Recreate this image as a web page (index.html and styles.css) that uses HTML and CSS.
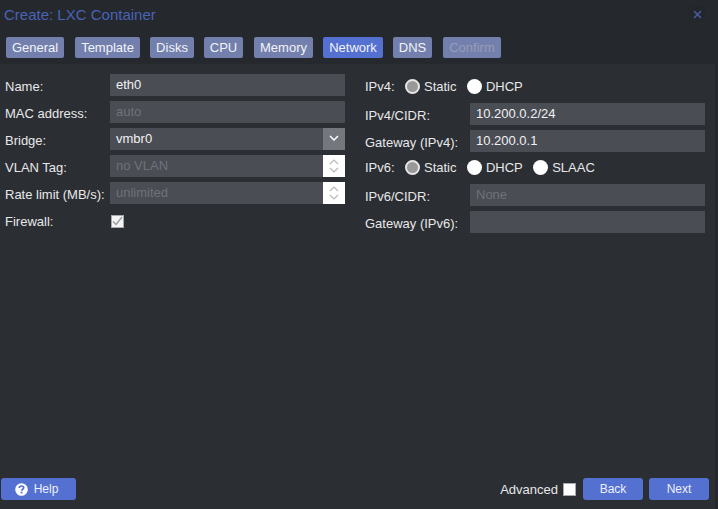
FILE: index.html
```html
<!DOCTYPE html>
<html lang="en">
<head>
<meta charset="utf-8">
<title>Create: LXC Container</title>
<link rel="stylesheet" href="styles.css">
</head>
<body>
<div class="window">
  <header class="head">
    <div class="titlebar">
      <h1 class="title">Create: LXC Container</h1>
      <span class="close"><svg width="9" height="9" viewBox="0 0 9 9"><path d="M1 1L8 8M8 1L1 8" stroke="#4a5a9c" stroke-width="1.6" fill="none"/></svg></span>
    </div>
    <nav class="tabs">
      <span class="tab w-general">General</span>
      <span class="tab w-template">Template</span>
      <span class="tab w-disks">Disks</span>
      <span class="tab w-cpu">CPU</span>
      <span class="tab w-memory">Memory</span>
      <span class="tab active w-network">Network</span>
      <span class="tab w-dns">DNS</span>
      <span class="tab off w-confirm">Confirm</span>
    </nav>
  </header>
  <main class="body">
    <div class="columns">
      <section class="col col-left">
        <div class="row"><span class="label">Name:</span><div class="field"><span class="value">eth0</span></div></div>
        <div class="row"><span class="label">MAC address:</span><div class="field"><span class="value ph">auto</span></div></div>
        <div class="row"><span class="label">Bridge:</span><div class="field"><span class="value">vmbr0</span><span class="trigger"><svg class="trigger-icon" width="10" height="6" viewBox="0 0 10 6"><path d="M1 1L5 5L9 1" stroke="#fff" stroke-width="1.5" fill="none"/></svg></span></div></div>
        <div class="row"><span class="label">VLAN Tag:</span><div class="field"><span class="value ph">no VLAN</span><span class="spinner"><svg width="10" height="14" viewBox="0 0 10 14"><path d="M1 5L5 1L9 5M1 9L5 13L9 9" stroke="#b8b8b8" stroke-width="1.2" fill="none"/></svg></span></div></div>
        <div class="row"><span class="label">Rate limit (MB/s):</span><div class="field"><span class="value ph">unlimited</span><span class="spinner"><svg width="10" height="14" viewBox="0 0 10 14"><path d="M1 5L5 1L9 5M1 9L5 13L9 9" stroke="#b8b8b8" stroke-width="1.2" fill="none"/></svg></span></div></div>
        <div class="row"><span class="label">Firewall:</span><span class="check checked"><svg width="11" height="10" viewBox="0 0 11 10"><path d="M1 5.5L4 8.5L10 1" stroke="#9a9a9a" stroke-width="1.3" fill="none"/></svg></span></div>
      </section>
      <section class="col col-right">
        <div class="row radio-first"><span class="radio-label">IPv4:</span><span class="radio on"></span><span class="opt">Static</span><span class="radio"></span><span class="opt">DHCP</span></div>
        <div class="row"><span class="label">IPv4/CIDR:</span><div class="field"><span class="value">10.200.0.2/24</span></div></div>
        <div class="row"><span class="label">Gateway (IPv4):</span><div class="field"><span class="value">10.200.0.1</span></div></div>
        <div class="row radio-second"><span class="radio-label">IPv6:</span><span class="radio on"></span><span class="opt">Static</span><span class="radio"></span><span class="opt">DHCP</span><span class="radio"></span><span class="opt">SLAAC</span></div>
        <div class="row"><span class="label">IPv6/CIDR:</span><div class="field"><span class="value ph">None</span></div></div>
        <div class="row"><span class="label">Gateway (IPv6):</span><div class="field"></div></div>
      </section>
    </div>
    <footer class="foot">
      <span class="btn btn-help"><svg class="help-icon" width="13" height="13" viewBox="0 0 13 13"><circle cx="6.5" cy="6.5" r="6.3" fill="#fff"/><path d="M4.3 5C4.4 3.7 5.4 3 6.5 3C7.8 3 8.7 3.8 8.7 4.8C8.7 6.2 6.8 6.2 6.6 7.7" stroke="#5470d0" stroke-width="1.7" fill="none"/><rect x="5.6" y="8.7" width="1.9" height="1.7" fill="#5470d0"/></svg>Help</span>
      <span class="adv">Advanced</span>
      <span class="check adv-check"></span>
      <span class="btn btn-nav">Back</span>
      <span class="btn btn-nav btn-next">Next</span>
    </footer>
  </main>
</div>
</body>
</html>
```
FILE: styles.css
```css
* { box-sizing: border-box; }
html, body { margin: 0; padding: 0; }
body {
  width: 718px;
  height: 509px;
  overflow: hidden;
  background: #25282d;
  color: #e8e8ea;
  font-family: "Liberation Sans", Arial, sans-serif;
  font-size: 13px;
}
.window { display: flex; flex-direction: column; height: 509px; }
.head { height: 64px; flex: none; }
.titlebar {
  display: flex;
  align-items: center;
  justify-content: space-between;
  height: 28px;
  padding: 0 3px 0 4px;
}
.title {
  margin: 0;
  font-size: 15px;
  font-weight: 400;
  color: #4a63b5;
}
.close {
  display: flex;
  align-items: center;
  justify-content: center;
  width: 16px;
  height: 16px;
  margin-right: 10px;
  background: #23262b;
}
.tabs { display: flex; height: 21px; margin-top: 9px; padding-left: 6px; }
.tab {
  display: flex;
  align-items: center;
  justify-content: center;
  flex: none;
  height: 21px;
  border-radius: 2px;
  background: #7380ad;
  color: #f2f3f8;
}
.tab.active { background: #5470d0; }
.tab.off { color: #969cb8; }
.w-general { width: 58px; margin-right: 11px; }
.w-template { width: 65px; margin-right: 10px; }
.w-disks { width: 44px; margin-right: 10px; }
.w-cpu { width: 39px; margin-right: 11px; }
.w-memory { width: 59px; margin-right: 10px; }
.w-network { width: 60px; margin-right: 10px; }
.w-dns { width: 39px; margin-right: 11px; }
.w-confirm { width: 58px; }
.body {
  flex: 1;
  display: flex;
  flex-direction: column;
  width: 715px;
  background: #2b2e33;
}
.columns { display: flex; flex: 1; gap: 20px; padding: 10px 0 0 5px; }
.col { display: flex; flex-direction: column; gap: 5px; width: 340px; }
.row { display: flex; align-items: center; height: 22px; }
.label { width: 105px; flex: none; padding-top: 3px; color: #e8e8ea; }
.field {
  display: flex;
  align-items: stretch;
  width: 235px;
  height: 22px;
  background: #4a4d54;
}
.value { flex: 1; padding: 0 6px; line-height: 22px; color: #f1f1f3; }
.value.ph { color: #6f7277; }
.trigger, .spinner {
  display: flex;
  align-items: center;
  justify-content: center;
  width: 22px;
  flex: none;
}
.trigger { background: #74777d; }
.trigger-icon { margin-bottom: 2px; }
.spinner { background: #fff; }
.check {
  display: flex;
  align-items: center;
  justify-content: center;
  width: 13px;
  height: 13px;
  border: 1px solid #a8a8a8;
  background: #fff;
}
.checked { background: #f4f4f4; margin: 2px 0 0 1px; }
.radio-first { padding-top: 3px; margin-bottom: 2px; }
.radio-second { padding-bottom: 1px; }
.radio-label { width: 40px; flex: none; }
.radio {
  width: 15px;
  height: 15px;
  flex: none;
  border-radius: 50%;
  background: #fff;
  margin-right: 4px;
}
.radio.on {
  background: #999;
  border: 2px solid #e6e6e6;
}
.opt { margin-right: 10.4px; }
.foot {
  display: flex;
  align-items: center;
  height: 22px;
  margin: 0 0 9px 1px;
}
.btn {
  display: flex;
  align-items: center;
  justify-content: center;
  height: 22px;
  border-radius: 3px;
  background: #5470d0;
  color: #eef0fb;
  font-size: 12px;
}
.btn-help { width: 75px; margin-right: auto; padding-right: 4px; }
.help-icon { margin-right: 6px; }
.adv { margin-right: 5px; }
.adv-check { margin-right: 7px; }
.btn-nav { width: 60px; }
.btn-next { margin-left: 6px; margin-right: 6px; }
```
